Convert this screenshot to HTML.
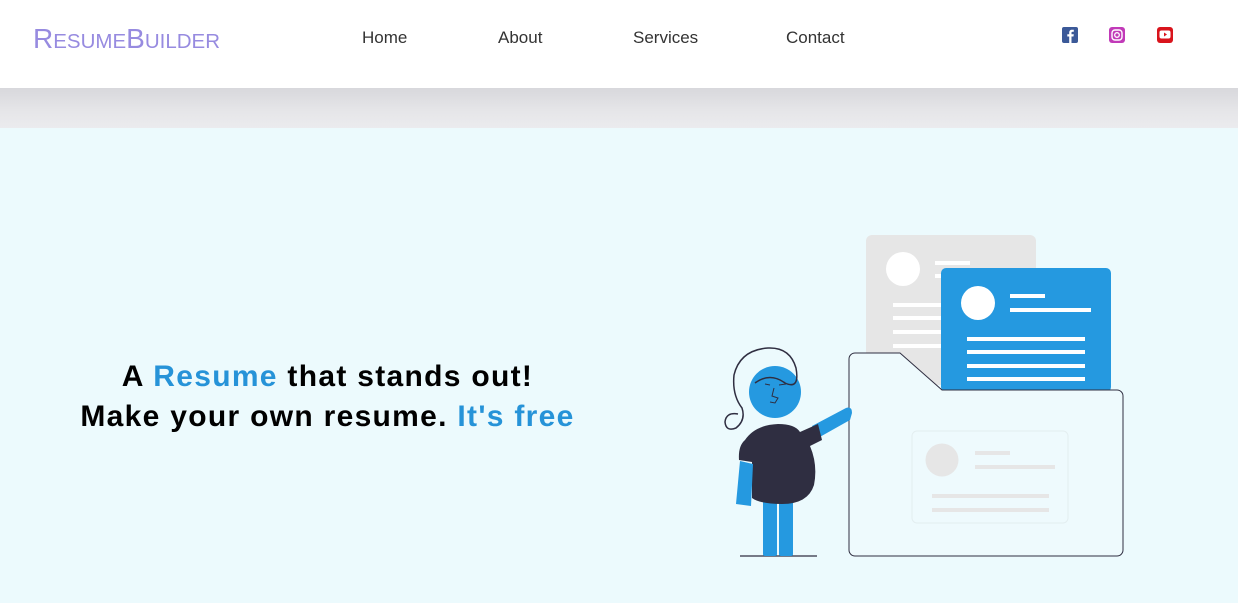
<!DOCTYPE html>
<html><head><meta charset="utf-8"><style>
*{margin:0;padding:0;box-sizing:border-box}
body{width:1238px;height:603px;overflow:hidden;background:#ecfafd;font-family:"Liberation Sans",sans-serif;position:relative}
.hdr{position:absolute;left:0;top:0;width:1238px;height:88px;background:#fff}
.shadow{position:absolute;left:0;top:88px;width:1238px;height:40px;background:linear-gradient(#d8d8dc,#e6e6e9 60%,#ebebee)}
.logo{position:absolute;left:33px;top:23px;color:#978be0;font-size:28px;white-space:nowrap}
.logo small{font-size:20.5px}
.nav a{position:absolute;top:28px;font-size:17px;color:#333;text-decoration:none}
.hero{position:absolute;left:0;width:655px;text-align:center;font-weight:bold;font-size:30px;color:#000;letter-spacing:1.3px}
.b{color:#2693d8}
</style></head><body>
<div class="hdr">
<div class="logo">R<small>ESUME</small>B<small>UILDER</small></div>
<div class="nav">
<a style="left:362px">Home</a>
<a style="left:498px">About</a>
<a style="left:633px">Services</a>
<a style="left:786px">Contact</a>
</div>
<svg style="position:absolute;left:1060px;top:26px" width="120" height="20">
<rect x="2" y="1" width="16" height="16" rx="2" fill="#3b5998"/>
<path d="M11.5 17V10.5h2l.3-2.3h-2.3V6.8c0-.6.2-1 1.1-1h1.2V3.8c-.4 0-1-.1-1.8-.1-1.700 0-2.8 1-2.8 2.9v1.6h-1.9v2.3h1.9V17z" fill="#fff"/>
<rect x="49" y="1" width="16" height="16" rx="3" fill="#c13ab8"/>
<rect x="52" y="4" width="10" height="10" rx="3" fill="none" stroke="#fff" stroke-width="1.4"/>
<circle cx="57" cy="9" r="2.3" fill="none" stroke="#fff" stroke-width="1.3"/>
<rect x="97" y="1" width="16" height="16" rx="3" fill="#d9141c"/>
<rect x="99.5" y="4.5" width="11" height="8" rx="2" fill="#fff"/>
<path d="M104 6.5v4l3-2z" fill="#d9141c"/>
</svg>
</div>
<div class="shadow"></div>
<div class="hero" style="top:360px">A <span class="b">Resume</span> that stands out!</div>
<div class="hero" style="top:400px">Make your own resume. <span class="b">It's free</span></div>
<svg style="position:absolute;left:0;top:0" width="1238" height="603">
<rect x="866" y="235" width="170" height="150" rx="6" fill="#e6e6e6"/>
<circle cx="903" cy="269" r="17" fill="#fff"/>
<rect x="935" y="261" width="35" height="4" fill="#fff"/>
<rect x="935" y="274" width="35" height="4" fill="#fff"/>
<rect x="893" y="303" width="60" height="4" fill="#fff"/>
<rect x="893" y="316" width="60" height="4" fill="#fff"/>
<rect x="893" y="330" width="60" height="4" fill="#fff"/>
<rect x="893" y="344" width="60" height="4" fill="#fff"/>
<rect x="941" y="268" width="170" height="124" rx="5" fill="#2599e0"/>
<circle cx="978" cy="303" r="17" fill="#fff"/>
<rect x="1010" y="294" width="35" height="4" fill="#fff"/>
<rect x="1010" y="308" width="81" height="4" fill="#fff"/>
<rect x="967" y="337" width="118" height="4" fill="#fff"/>
<rect x="967" y="350" width="118" height="4" fill="#fff"/>
<rect x="967" y="364" width="118" height="4" fill="#fff"/>
<rect x="967" y="377" width="118" height="4" fill="#fff"/>
<path d="M855 353H900L942 390H1117a6 6 0 0 1 6 6V550a6 6 0 0 1-6 6H855a6 6 0 0 1-6-6V359a6 6 0 0 1 6-6z" fill="#eefafd" stroke="#2f2e41" stroke-width="1"/>
<rect x="912" y="431" width="156" height="92" rx="5" fill="none" stroke="#e3eef0" stroke-width="1"/>
<circle cx="942" cy="460" r="16.5" fill="#e6e6e6"/>
<rect x="975" y="451" width="35" height="4" fill="#e6e6e6"/>
<rect x="975" y="465" width="80" height="4" fill="#e6e6e6"/>
<rect x="932" y="494" width="117" height="4" fill="#e6e6e6"/>
<rect x="932" y="508" width="117" height="4" fill="#e6e6e6"/>
<line x1="740" y1="556" x2="817" y2="556" stroke="#2f2e41" stroke-width="1.2"/>
<rect x="763" y="500" width="14" height="56" rx="2" fill="#2599e0"/>
<rect x="779" y="500" width="14" height="56" rx="2" fill="#2599e0"/>
<path d="M812 426 L846 408 Q852 406 852 413 L850 420 L818 438 Z" fill="#2599e0"/>
<path d="M745 440 Q755 425 778 424 Q795 424 800 432 L818 424 L822 440 L810 446 Q818 465 814 485 Q808 504 782 504 Q760 504 752 498 L752 462 L739 460 Q738 446 745 440Z" fill="#2f2e41"/>
<path d="M740 461 L753 464 L751 506 L736 504 Z" fill="#2599e0"/>
<circle cx="775" cy="392" r="26" fill="#2599e0"/>
<path d="M755 383 Q770 372 785 383 Q800 390 796 368 Q790 347 768 348 Q740 350 734 375 Q732 395 742 408 Q746 420 736 428 Q726 432 725 422 Q726 412 738 414" fill="none" stroke="#2f2e41" stroke-width="1.5"/>
<path d="M774 388 L772 396 L778 398 L775 403 L770 402" fill="none" stroke="#2f2e41" stroke-width="1"/>
<line x1="765" y1="384" x2="770" y2="385" stroke="#2f2e41" stroke-width="1"/>
<line x1="779" y1="385" x2="786" y2="384" stroke="#2f2e41" stroke-width="1"/>
</svg>
</body></html>
